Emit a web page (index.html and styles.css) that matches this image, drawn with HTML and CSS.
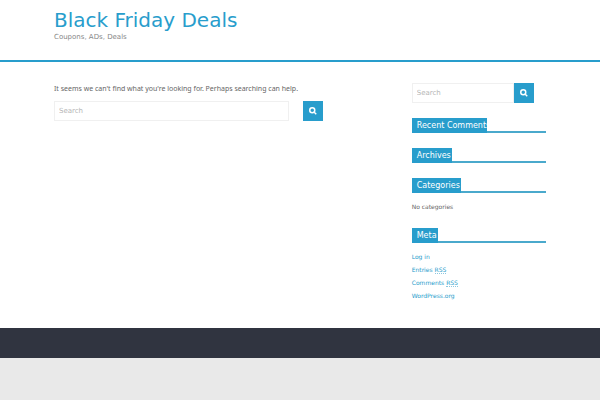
FILE: index.html
```html
<!DOCTYPE html>
<html lang="en">

<head>
  <meta charset="UTF-8">
  <meta name="viewport" content="width=device-width, initial-scale=1.0">
  <title>Black Friday Deals</title>
  <link rel="stylesheet" href="styles.css">
</head>

<body>
  <header class="site-header">
    <div class="inner-wrap">
      <h1 class="site-title"><a href="#">Black Friday Deals</a></h1>
      <p class="site-description">Coupons, ADs, Deals</p>
    </div>
  </header>

  <div class="main">
    <div class="inner-wrap columns">
      <main class="content">
        <p class="no-results">It seems we can't find what you're looking for. Perhaps searching can help.</p>
        <form class="search-form search-wide">
          <input class="search-field" type="text" placeholder="Search" aria-label="Search">
          <button class="search-icon" type="submit" aria-label="Search">
            <svg viewBox="0 0 16 16" width="8" height="8">
              <circle cx="6.5" cy="6.5" r="5" />
              <path d="M10.5 10.5L14.5 14.5" />
            </svg>
          </button>
        </form>
      </main>

      <aside class="sidebar">
        <form class="search-form">
          <input class="search-field" type="text" placeholder="Search" aria-label="Search">
          <button class="search-icon" type="submit" aria-label="Search">
            <svg viewBox="0 0 16 16" width="8" height="8">
              <circle cx="6.5" cy="6.5" r="5" />
              <path d="M10.5 10.5L14.5 14.5" />
            </svg>
          </button>
        </form>

        <section class="widget">
          <h3 class="widget-title"><span>Recent Comments</span></h3>
        </section>

        <section class="widget">
          <h3 class="widget-title"><span>Archives</span></h3>
        </section>

        <section class="widget">
          <h3 class="widget-title"><span>Categories</span></h3>
          <ul>
            <li>No categories</li>
          </ul>
        </section>

        <section class="widget">
          <h3 class="widget-title"><span>Meta</span></h3>
          <ul>
            <li><a href="#">Log in</a></li>
            <li><a href="#">Entries <abbr>RSS</abbr></a></li>
            <li><a href="#">Comments <abbr>RSS</abbr></a></li>
            <li><a href="#">WordPress.org</a></li>
          </ul>
        </section>
      </aside>
    </div>
  </div>

  <footer class="site-footer"></footer>
</body>

</html>
```

FILE: styles.css
```css
* {
  box-sizing: border-box;
}

body {
  margin: 0;
  background-color: #e9e9e9;
  color: #666;
  font-family: "DejaVu Sans", sans-serif;
  font-size: 6px;
  line-height: 13px;
}

h1, h3, p, ul {
  margin: 0;
  padding: 0;
  font-weight: normal;
}

ul {
  list-style: none;
}

a {
  color: #289dcc;
  text-decoration: none;
}

.inner-wrap {
  width: 82%;
  margin: 0 auto;
}

/* Header */
.site-header {
  padding: 8px 0 18px;
  background-color: #fff;
  border-bottom: 2px solid #289dcc;
}

.site-title {
  font-size: 20px;
  line-height: 24px;
}

.site-description {
  color: #888;
  font-size: 7px;
  line-height: 11px;
  margin-bottom: -1px;
}

/* Content */
.main {
  padding: 21px 0 11px;
  background-color: #fff;
}

.columns {
  display: flex;
  justify-content: space-between;
}

.content {
  width: 68%;
}

.no-results {
  margin-bottom: 6px;
  font-family: "Noto Sans", sans-serif;
  font-size: 7px;
  line-height: 12px;
}

.search-form {
  display: flex;
}

.search-field {
  flex: 1;
  min-width: 0;
  height: 20px;
  padding: 0 4px;
  border: 1px solid #f0f0f0;
  background-color: #fff;
  color: #666;
  font-family: inherit;
  font-size: 7px;
}

.search-field::placeholder {
  color: #b5b5b5;
}

.search-icon {
  display: flex;
  align-items: center;
  justify-content: center;
  width: 20px;
  height: 20px;
  padding: 0;
  border: none;
  background-color: #289dcc;
  cursor: pointer;
}

.search-icon svg {
  fill: none;
  stroke: #fff;
  stroke-width: 3;
}

.search-wide {
  width: 80.5%;
  gap: 14px;
}

/* Sidebar */
.sidebar {
  width: 27.3%;
}

.sidebar .search-form {
  width: 91%;
  margin-bottom: 15px;
}

.widget {
  margin-bottom: 15px;
}

.widget-title {
  height: 15px;
  border-bottom: 2px solid #4aa9cc;
  color: #fff;
  font-size: 8px;
  line-height: 15px;
}

/* long titles run past the tab */
.widget-title span {
  display: block;
  width: fit-content;
  max-width: 56%;
  padding: 0 1px 0 5px;
  background-color: #289dcc;
  white-space: nowrap;
}

.widget ul {
  padding-top: 7px;
}

abbr {
  border-bottom: 1px dotted #8cc8e0;
}

/* Footer */
.site-footer {
  height: 30px;
  background-color: #303440;
}
```
